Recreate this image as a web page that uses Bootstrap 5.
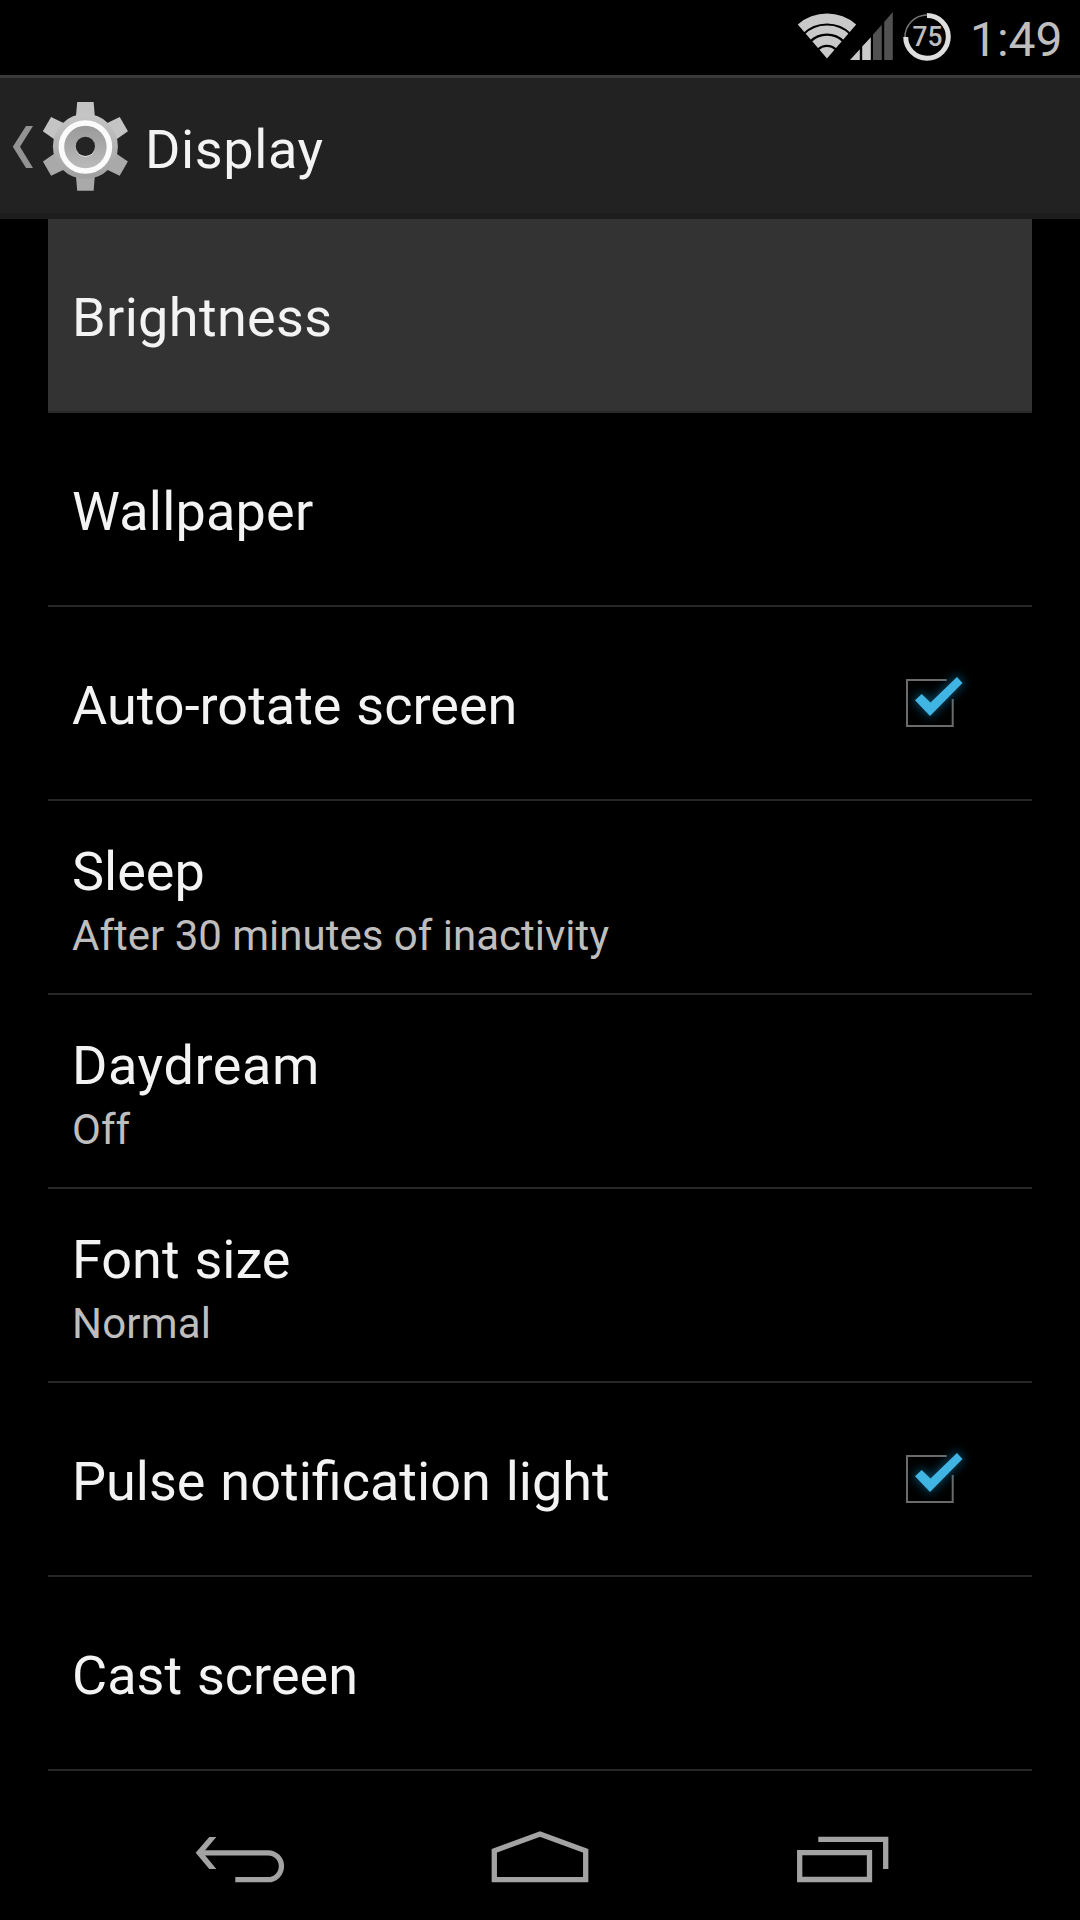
<!DOCTYPE html>
<html lang="en" data-bs-theme="dark">
<head>
<meta charset="utf-8">
<meta name="viewport" content="width=device-width, initial-scale=1">
<title>Display</title>
<link href="https://cdn.jsdelivr.net/npm/bootstrap@5.3.0/dist/css/bootstrap.min.css" rel="stylesheet">
<style>
  body { background: #000; color: #f3f3f3; font-family: Roboto, "Liberation Sans", sans-serif; width: 1080px; height: 1920px; overflow: hidden; }
  svg { display: block; flex: none; }
  .status-bar { height: 75px; padding-right: 22px; }
  .clock { font-size: 48px; line-height: 80px; color: #bebebe; width: 88px; white-space: nowrap; }
  .action-bar { height: 144px; background: #222; border-top: 3px solid #393939; border-bottom: 6px solid #1d1d1d; }
  .action-title { font-size: 54px; line-height: 72px; padding-top: 8px; margin-left: 13px; letter-spacing: .6px; }
  .settings { margin: 0 48px; }
  .setting { height: 194px; padding: 5px 52px 0 24px; border-bottom: 2px solid #262626; background: #000; }
  .setting.pressed { background: #333; border-bottom-color: #292929; }
  .setting-title { font-size: 54px; line-height: 72px; white-space: nowrap; }
  .setting-note { font-size: 42px; line-height: 56px; color: #bebebe; white-space: nowrap; }
  .track-1 { letter-spacing: .2px; }
  .track-2 { letter-spacing: .35px; }
  .track-3 { letter-spacing: .6px; }
  .word-gap { word-spacing: 1.5px; }
  .check-icon { margin-bottom: 2px; }
  .nav-keys { height: 149px; padding: 0 183px 0 185px; }
</style>
<script src="https://cdn.jsdelivr.net/npm/bootstrap@5.3.0/dist/js/bootstrap.bundle.min.js"></script>
</head>
<body class="d-flex flex-column m-0">

<svg width="0" height="0" class="position-absolute" aria-hidden="true">
  <defs>
    <filter id="glow" x="-60%" y="-60%" width="220%" height="220%"><feGaussianBlur stdDeviation="5"/></filter>
    <symbol id="checked" viewBox="890 660 90 90">
      <path d="M946.7 680H907V726H952.7V699" fill="none" stroke="#6b6b6b" stroke-width="2"/>
      <path d="M915 700.3L921.7 694L930.5 702.5L957 677L962.5 683L930 716Z" fill="#0a7fae" stroke="#0a7fae" stroke-width="4" opacity=".5" filter="url(#glow)"/>
      <path d="M915 700.3L921.7 694L930.5 702.5L957 677L962.5 683L930 716Z" fill="#40b4e2"/>
    </symbol>
  </defs>
</svg>

<div class="status-bar d-flex justify-content-end">
  <svg width="174" height="75" viewBox="796 0 174 75">
    <path d="M827 58.5L797.8 24.4A44.6 44.6 0 0 1 856.2 24.4Z" fill="#c9c9c9"/>
    <g fill="none" stroke="#000" stroke-width="2.2">
      <circle cx="827" cy="58.5" r="34"/><circle cx="827" cy="58.5" r="23.8"/><circle cx="827" cy="58.5" r="12.7"/>
    </g>
    <path d="M850 60L859.8 49.2V60ZM862.2 46.5L870.8 37.2V60H862.2Z" fill="#c9c9c9"/>
    <path d="M873 34.5L881.8 24.8V60H873ZM884.2 22L892.8 12V60H884.2Z" fill="#515151"/>
    <path d="M905 37A22 22 0 0 1 927 15" fill="none" stroke="#777" stroke-width="1.5"/>
    <path d="M927 15.6A21.3 21.3 0 1 1 905.7 37" fill="none" stroke="#dedede" stroke-width="5"/>
    <text x="927.5" y="46" text-anchor="middle" font-size="27" font-weight="500" fill="#bdbdbd" textLength="30" lengthAdjust="spacingAndGlyphs">75</text>
  </svg>
  <div class="clock">1:49</div>
</div>

<header class="action-bar d-flex align-items-center">
  <svg width="132" height="135" viewBox="0 78 132 135">
    <defs>
      <linearGradient id="metal" x1="0" y1="0" x2="0" y2="1"><stop offset="0" stop-color="#c6c6c6"/><stop offset="1" stop-color="#a0a0a0"/></linearGradient>
      <linearGradient id="hub" x1="0" y1="0" x2="0" y2="1"><stop offset="0" stop-color="#989898"/><stop offset="1" stop-color="#bcbcbc"/></linearGradient>
    </defs>
    <path d="M12.8 146.8L26 126H33L20 146.8L33 168H26Z" fill="#939393"/>
    <g>
      <path id="tooth" d="M77.2 102H93.6L95 118H75.8Z" fill="#c4c4c4"/>
      <use href="#tooth" transform="rotate(60 85.4 146.4)"/>
      <use href="#tooth" transform="rotate(-60 85.4 146.4)"/>
      <path id="lower" d="M75.8 174H95L93.6 190.7H77.2Z" fill="#a9a9a9"/>
      <use href="#lower" transform="rotate(60 85.4 146.4)"/>
      <use href="#lower" transform="rotate(-60 85.4 146.4)"/>
      <circle cx="85.4" cy="146.4" r="32.5" fill="url(#metal)"/>
    </g>
    <circle cx="85.4" cy="147" r="24" fill="url(#hub)" stroke="#fbfbfb" stroke-width="5.6"/>
    <circle cx="85.4" cy="147.4" r="9.6" fill="#dedede"/>
    <circle cx="85.4" cy="146.4" r="9.6" fill="#242424"/>
  </svg>
  <div class="action-title">Display</div>
</header>

<main class="settings">
  <div class="setting pressed d-flex align-items-center"><div class="setting-title track-2">Brightness</div></div>
  <div class="setting d-flex align-items-center"><div class="setting-title track-1">Wallpaper</div></div>
  <div class="setting d-flex align-items-center justify-content-between"><div class="setting-title word-gap">Auto-rotate screen</div><svg class="check-icon" width="90" height="90"><use href="#checked"/></svg></div>
  <div class="setting d-flex flex-column justify-content-center"><div class="setting-title">Sleep</div><div class="setting-note">After 30 minutes of inactivity</div></div>
  <div class="setting d-flex flex-column justify-content-center"><div class="setting-title track-3">Daydream</div><div class="setting-note">Off</div></div>
  <div class="setting d-flex flex-column justify-content-center"><div class="setting-title word-gap">Font size</div><div class="setting-note track-1">Normal</div></div>
  <div class="setting d-flex align-items-center justify-content-between"><div class="setting-title word-gap">Pulse notification light</div><svg class="check-icon" width="90" height="90"><use href="#checked"/></svg></div>
  <div class="setting d-flex align-items-center"><div class="setting-title word-gap">Cast screen</div></div>
</main>

<nav class="nav-keys d-flex justify-content-between">
  <svg width="110" height="149" viewBox="185 1771 110 149"><path d="M235.3 1879.7H268A13.4 13.4 0 0 0 268 1852.8H201" fill="none" stroke="#a3a3a3" stroke-width="5.3"/><path d="M195.7 1852.8L209.3 1837H216.3L203 1852.8L216.3 1869H209.3Z" fill="#a3a3a3"/></svg>
  <svg width="110" height="149" viewBox="486 1771 110 149"><path d="M494.3 1879.7V1850.8L540 1834L585.7 1850.8V1879.7Z" fill="none" stroke="#a3a3a3" stroke-width="5.3"/></svg>
  <svg width="110" height="149" viewBox="787 1771 110 149"><path d="M799.7 1852.7H869.5V1879.5H799.7ZM818.3 1839.3H885.7V1869" fill="none" stroke="#a3a3a3" stroke-width="5.3"/></svg>
</nav>
</body>
</html>
